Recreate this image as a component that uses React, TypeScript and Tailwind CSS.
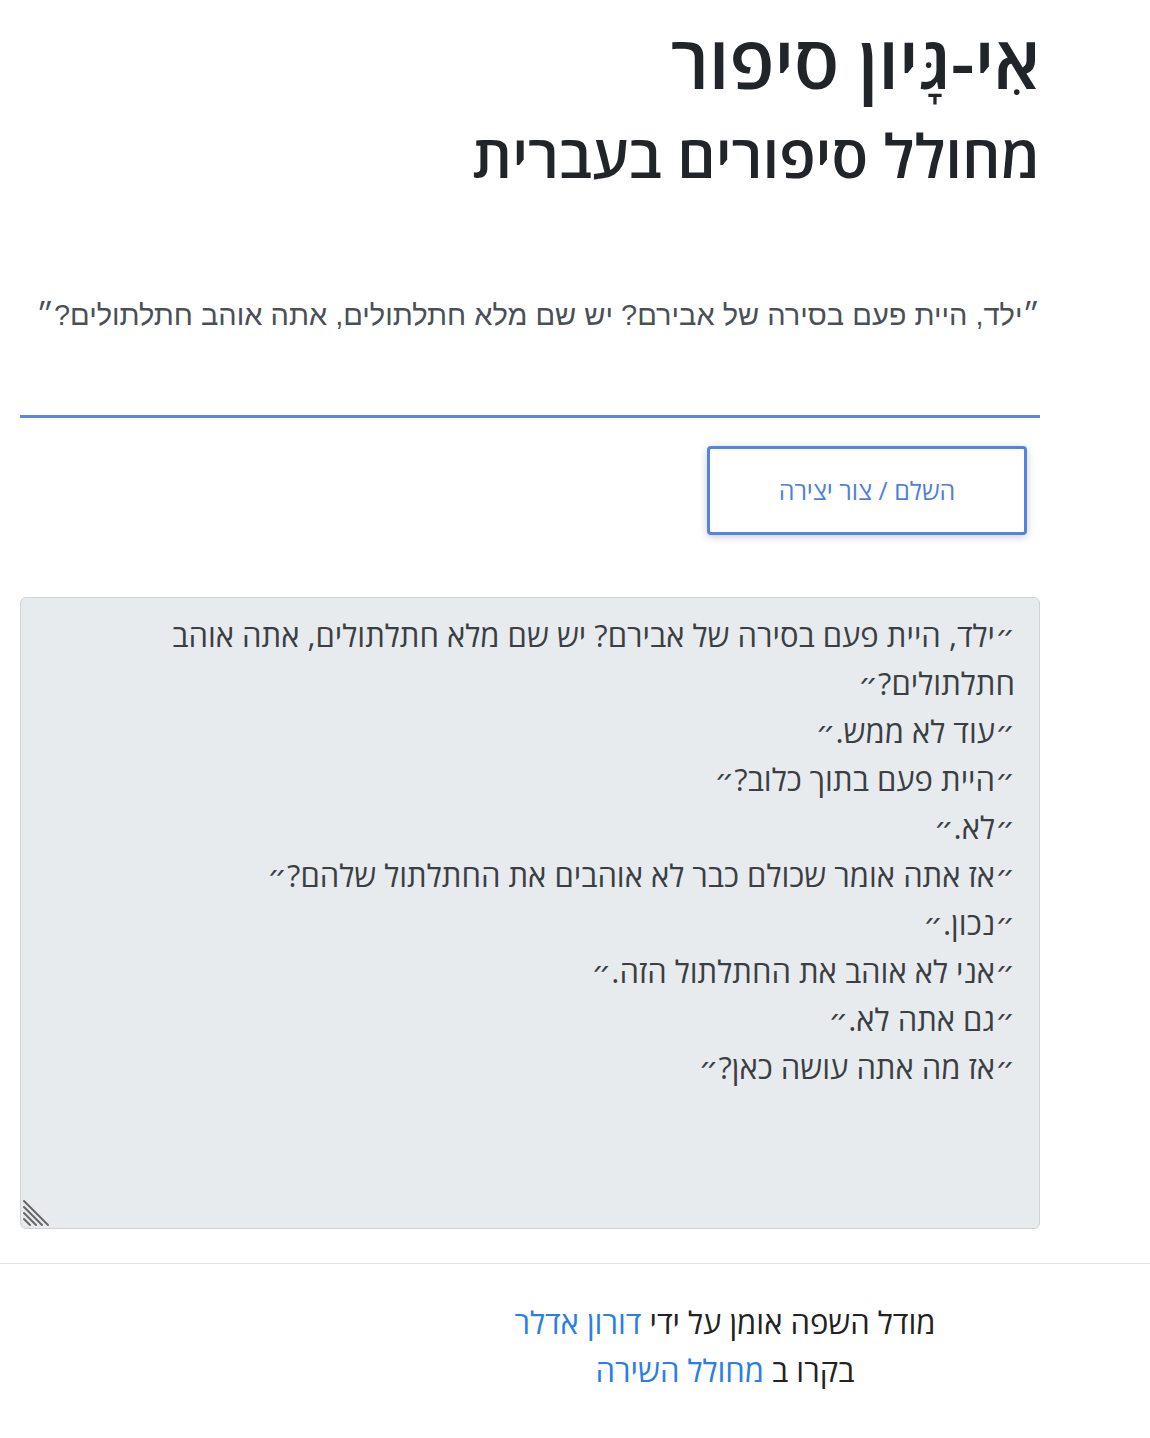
const story = `״ילד, היית פעם בסירה של אבירם? יש שם מלא חתלתולים, אתה אוהב
חתלתולים?״
״עוד לא ממש.״
״היית פעם בתוך כלוב?״
״לא.״
״אז אתה אומר שכולם כבר לא אוהבים את החתלתול שלהם?״
״נכון.״
״אני לא אוהב את החתלתול הזה.״
״גם אתה לא.״
״אז מה אתה עושה כאן?״`;

function ResizeGrip() {
  return (
    <svg width="28" height="28" viewBox="0 0 28 28" className="pointer-events-none absolute bottom-[2px] left-[2px]">
      <g stroke="#666" strokeWidth="2" strokeLinecap="round">
        <line x1="2" y1="2" x2="26" y2="26" />
        <line x1="2" y1="8" x2="20" y2="26" />
        <line x1="2" y1="14" x2="14" y2="26" />
        <line x1="2" y1="20" x2="8" y2="26" />
      </g>
    </svg>
  );
}

export default function App() {
  return (
    <div dir="rtl" className="min-h-[1438px] bg-white font-['Open_Sans','Noto_Sans','DejaVu_Sans',sans-serif] text-[#212529]">
      <main className="mr-[110px] ml-[20px] pt-[17px]">
        <h1 className="text-[74px] font-semibold leading-[1.2]">אִי-גָּיון סיפור</h1>
        <h2 className="mt-[13px] text-[60px] font-semibold leading-[1.2]">מחולל סיפורים בעברית</h2>

        <input
          type="text"
          defaultValue="״ילד, היית פעם בסירה של אבירם? יש שם מלא חתלתולים, אתה אוהב חתלתולים?״"
          className="mt-[86px] block w-full border-b-[3px] border-[#5b87e0] bg-white pt-[20px] pb-[82px] font-['Liberation_Sans','DejaVu_Sans',sans-serif] text-[29px] leading-[36px] text-[#495057] outline-none"
        />

        <div className="mt-[28px] flex">
          <button className="mr-[13px] h-[89px] w-[320px] rounded-[4px] border-[3px] border-[#5584e0] bg-white text-[25px] font-medium text-[#4f7fdd] shadow-[0_2px_8px_rgba(0,0,0,0.2)]">
            השלם / צור יצירה
          </button>
        </div>

        <div className="relative mt-[62px]">
          <textarea
            readOnly
            defaultValue={story}
            className="block h-[632px] w-full resize-none rounded-[6px] border-[1.5px] border-[#cfd3d7] bg-[#e8ebee] px-[24px] pt-[13px] text-[31px] leading-[48px] text-[#3a3f44] outline-none"
          />
          <ResizeGrip />
        </div>
      </main>

      <hr className="mt-[34px] border-t border-[#e3e3e3]" />

      <footer className="pl-[300px] pt-[34px] text-center text-[31px] leading-[48px] text-[#222]">
        <p>
          מודל השפה אומן על ידי <a href="#" className="text-[#2b7de9]">דורון אדלר</a>
        </p>
        <p>
          בקרו ב <a href="#" className="text-[#2b7de9]">מחולל השירה</a>
        </p>
      </footer>
    </div>
  );
}
